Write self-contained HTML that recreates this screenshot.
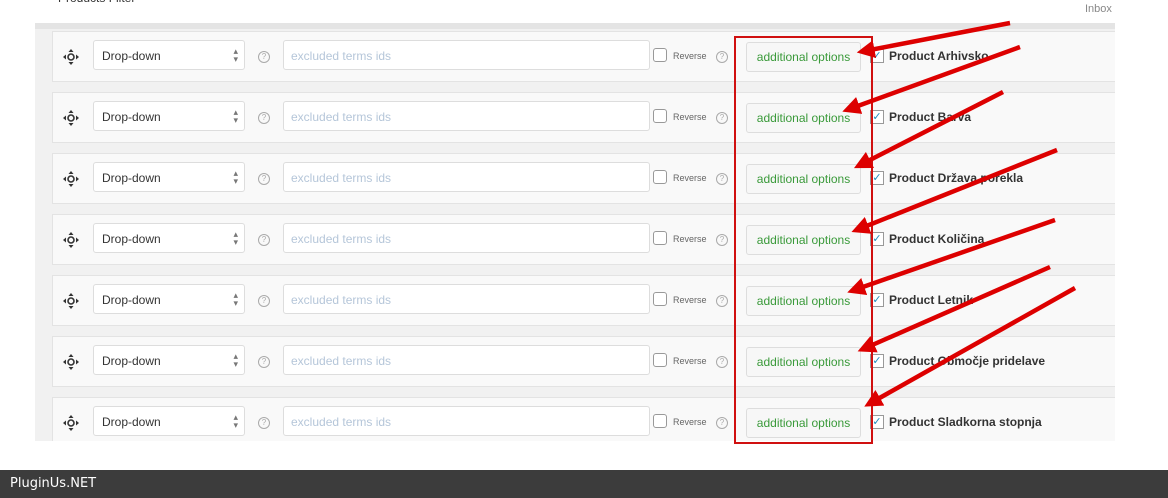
<!DOCTYPE html><html><head><style>
body{margin:0;width:1168px;height:498px;background:#fff;position:relative;overflow:hidden;font-family:"Liberation Sans",sans-serif}
.wrap{position:absolute;left:35px;top:23px;width:1080px;height:418px;background:#f1f1f1;border-top:6px solid #e4e4e4;box-sizing:border-box;overflow:hidden}
.row{position:absolute;left:17px;width:1080px;height:51px;background:#f9f9f9;border:1px solid #e3e3e3;box-sizing:border-box}
.sel{position:absolute;left:40px;top:8px;width:152px;height:30px;background:#fff;border:1px solid #ddd;border-radius:3px;box-sizing:border-box;font-size:12px;color:#333;padding:8px 0 0 8px}
.sel:after{content:"▴\A▾";white-space:pre;position:absolute;right:6px;top:6px;font-size:9px;line-height:8px;color:#777}
.q{position:absolute;width:10px;height:10px;border:1px solid #aaa;border-radius:50%;font-size:8px;color:#aaa;text-align:center;line-height:10px}
.inp{position:absolute;left:230px;top:8px;width:367px;height:30px;background:#fff;border:1px solid #ddd;border-radius:3px;box-sizing:border-box;font-size:12px;color:#b5c6d9;padding:8px 0 0 7px}
.cb{position:absolute;left:600px;top:16px;width:12px;height:12px;border:1px solid #999;border-radius:3px;background:#fff}
.rev{position:absolute;left:620px;top:19px;font-size:9px;color:#666}
.btn{position:absolute;left:693px;top:10px;width:115px;height:30px;background:#f7f7f7;border:1px solid #ddd;border-radius:3px;box-sizing:border-box;font-size:12px;color:#3a9a3a;text-align:center;line-height:28px}
.cb2{position:absolute;left:817px;top:17px;width:12px;height:12px;border:1px solid #999;background:#fff;font-size:11px;color:#1e8cbe;line-height:12px;text-align:center}
.lab{position:absolute;left:836px;top:17px;font-size:12px;color:#333;font-weight:bold}
.mv{position:absolute;left:8px;top:15px}
</style></head><body>
<div style="position:absolute;left:58px;top:-9px;font-size:12px;color:#333">Products Filter</div>
<div style="position:absolute;left:1085px;top:3px;font-size:11px;color:#888">Inbox</div>
<div class="wrap">
<div id="rows"></div>
</div>
<div style="position:absolute;left:0;top:470px;width:1168px;height:28px;background:#3c3c3c;color:#fff;font-size:13px;line-height:28px;padding-left:10px;box-sizing:border-box;font-family:'DejaVu Sans',sans-serif">PluginUs.NET</div>
<div style="position:absolute;left:734px;top:36px;width:139px;height:408px;border:2px solid #d01010;box-sizing:border-box"></div>
<svg width="1168" height="498" style="position:absolute;left:0;top:0">
<defs><marker id="a" markerWidth="4" markerHeight="4" refX="1" refY="2" orient="auto"><path d="M0,0L4,2L0,4z" fill="#d00"/></marker></defs>
<g stroke="#d00" stroke-width="4.5" marker-end="url(#a)">
<line x1="1010" y1="23" x2="870" y2="50"/>
<line x1="1020" y1="47" x2="855" y2="107"/>
<line x1="1003" y1="92" x2="866" y2="162"/>
<line x1="1057" y1="150" x2="864" y2="227"/>
<line x1="1055" y1="220" x2="860" y2="288"/>
<line x1="1050" y1="267" x2="870" y2="346"/>
<line x1="1075" y1="288" x2="876" y2="400"/>
</g></svg>
<script>
var n=["Product Arhivsko","Product Barva","Product Država porekla","Product Količina","Product Letnik","Product Območje pridelave","Product Sladkorna stopnja"],h="";
var mv='<svg class="mv" width="20" height="20" viewBox="0 0 20 20"><circle cx="10" cy="10" r="3" fill="none" stroke="#333" stroke-width="1.6"/><path d="M10 2L7.5 5h5zM10 18L7.5 15h5zM2 10L5 7.5v5zM18 10L15 7.5v5z" fill="#333"/></svg>';
for(var i=0;i<7;i++){h+='<div class="row" style="top:'+(2+61*i)+'px">'+mv+'<div class="sel">Drop-down</div><div class="q" style="left:205px;top:19px">?</div><div class="inp">excluded terms ids</div><div class="cb"></div><div class="rev">Reverse</div><div class="q" style="left:663px;top:19px">?</div><div class="btn">additional options</div><div class="cb2">✓</div><div class="lab">'+n[i]+'</div></div>';}
document.getElementById("rows").innerHTML=h;
</script>
</body></html>
